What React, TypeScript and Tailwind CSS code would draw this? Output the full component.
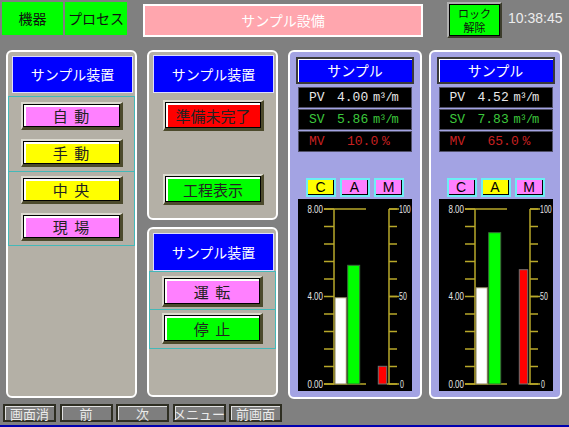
import type { ReactNode } from 'react';

type Gauge = {
  pv: string;
  sv: string;
  mv: string;
  cam: string[];
  white: number;
  green: number;
  red: number;
};

const gauges: Gauge[] = [
  { pv: '4.00', sv: '5.86', mv: '10.0', cam: ['bg-[#ffff00]', 'bg-[#ff80ff]', 'bg-[#ff80ff]'], white: 98.7, green: 66.3, red: 167.3 },
  { pv: '4.52', sv: '7.83', mv: '65.0', cam: ['bg-[#ff80ff]', 'bg-[#ffff00]', 'bg-[#ff80ff]'], white: 88.7, green: 33.7, red: 70.7 },
];

function HmiButton({ bg, children, className = '' }: { bg: string; children: ReactNode; className?: string }) {
  return (
    <div
      className={`border-t-2 border-l-2 border-b-[3px] border-r-[3px] border-t-[#dcdad0] border-l-[#dcdad0] border-b-[#4c4a2c] border-r-[#4c4a2c] ${className}`}
    >
      <div
        className={`h-full border border-black shadow-[inset_2px_2px_0_#fff] flex items-center justify-center text-[15px] leading-none text-[#222] whitespace-nowrap ${bg}`}
      >
        {children}
      </div>
    </div>
  );
}

function Header({ className = '' }: { className?: string }) {
  return (
    <div
      className={`ml-[4px] w-[121px] bg-[#0000ff] border border-[#dcdcff] flex items-center justify-center text-white text-[14px] ${className}`}
    >
      サンプル装置
    </div>
  );
}

// narrow scale label, squeezed horizontally like the panel's bitmap font
function Label({ x, y, sx = 0.7, end, children }: { x: number; y: number; sx?: number; end?: boolean; children: string }) {
  return (
    <text transform={`translate(${x} ${y}) scale(${sx} 1)`} textAnchor={end ? 'end' : 'start'}>
      {children}
    </text>
  );
}

function Chart({ g }: { g: Gauge }) {
  const ticks = Array.from({ length: 11 }, (_, i) => 10 + i * 17.5);
  const tick = '#b8a82a';
  const bottom = 185;
  return (
    <svg width="114" height="192" className="mt-[2px] bg-black block">
      {ticks.map((y, i) => (
        <g key={i}>
          <line x1={26} x2={36} y1={y} y2={y} stroke={tick} strokeWidth={1.5} />
          <line x1={91} x2={99} y1={y} y2={y} stroke={tick} strokeWidth={1.5} />
        </g>
      ))}
      <line x1={36} x2={36} y1={10} y2={bottom} stroke={tick} strokeWidth={1.5} />
      <line x1={91} x2={91} y1={10} y2={bottom} stroke={tick} strokeWidth={1.5} />
      <line x1={26} x2={68} y1={10} y2={10} stroke={tick} strokeWidth={1.5} />
      <line x1={26} x2={68} y1={bottom} y2={bottom} stroke={tick} strokeWidth={1.5} />
      <line x1={91} x2={101} y1={10} y2={10} stroke={tick} strokeWidth={1.5} />
      <line x1={89} x2={101} y1={bottom} y2={bottom} stroke={tick} strokeWidth={1.5} />
      <line x1={91} x2={101} y1={97.5} y2={97.5} stroke={tick} strokeWidth={1.5} />

      <g fill="#e6e6e6" fontSize="10" fontFamily="'Liberation Sans', sans-serif">
        <Label x={25} y={13.5} sx={0.8} end>8.00</Label>
        <Label x={25} y={101} sx={0.8} end>4.00</Label>
        <Label x={25} y={188.5} sx={0.8} end>0.00</Label>
        <Label x={101} y={13.5}>100</Label>
        <Label x={101} y={101}>50</Label>
        <Label x={102} y={188.5}>0</Label>
      </g>

      <rect x={37} y={g.white} width={11.3} height={bottom - g.white} fill="#fff" stroke="#8a8258" strokeWidth={1} />
      <rect x={49.7} y={g.green} width={12} height={bottom - g.green} fill="#00ff00" stroke="#3a6a3a" strokeWidth={1} />
      <rect x={80.3} y={g.red} width={8.4} height={bottom - g.red} fill="#ff0000" stroke="#707070" strokeWidth={1} />
    </svg>
  );
}

function GaugePanel({ g, className = '' }: { g: Gauge; className?: string }) {
  return (
    <div
      className={`h-[349px] border-2 border-white rounded-[6px] bg-[#a3a3e3] flex flex-col items-center ${className}`}
    >
      <div className="mt-[5px] w-[118px] h-[27px] border-2 border-[#3a3a3a] bg-[#0000ff] shadow-[inset_1px_1px_0_#fff] flex items-center justify-center text-white text-[14px]">
        サンプル
      </div>
      <div className="mt-[3px] w-[114px] flex flex-col gap-[1px] font-['Liberation_Mono',monospace] text-[13px]">
        <div className="h-[21px] bg-black border border-[#505068] flex items-center text-[#e8e8e8]">
          <span className="ml-[10px] w-[28px]">PV</span>
          <span className="w-[36px]">{g.pv}</span>
          <span className="text-[12px] tracking-[-1px]">m³/m</span>
        </div>
        <div className="h-[21px] bg-black border border-[#505068] flex items-center text-[#3cc83c]">
          <span className="ml-[10px] w-[28px]">SV</span>
          <span className="w-[36px]">{g.sv}</span>
          <span className="text-[12px] tracking-[-1px]">m³/m</span>
        </div>
        <div className="h-[21px] bg-black border border-[#505068] flex items-center text-[#c82020]">
          <span className="ml-[10px] w-[38px]">MV</span>
          <span className="w-[35px]">{g.mv}</span>
          <span>%</span>
        </div>
      </div>
      <div className="mt-[26px] flex gap-[4px]">
        {['C', 'A', 'M'].map((l, i) => (
          <div key={l} className="w-[30px] h-[19px] border-2 border-[#6ceef4]">
            <div
              className={`h-full border-r border-b border-black flex items-center justify-center text-[14px] leading-none text-black font-['Liberation_Sans',sans-serif] ${g.cam[i]}`}
            >
              {l}
            </div>
          </div>
        ))}
      </div>
      <Chart g={g} />
    </div>
  );
}

export default function App() {
  return (
    <div className="w-[569px] h-[427px] bg-[#808080] overflow-hidden flex flex-col font-['Noto_Sans_CJK_JP',sans-serif]">
      {/* top bar */}
      <div className="h-[50px] flex items-start pt-[2px] pl-[2px]">
        <div className="w-[61px] h-[33px] bg-[#00ff00] flex items-center justify-center text-[14px] text-[#111]">機器</div>
        <div className="ml-[2px] w-[62px] h-[33px] bg-[#00ff00] flex items-center justify-center text-[14px] text-[#111]">プロセス</div>
        <div className="ml-[16px] mt-[2px] w-[280px] h-[33px] bg-[#ffa6ae] border-2 border-white flex items-center justify-center text-white text-[14px]">
          サンプル設備
        </div>
        <div className="ml-[24px] w-[55px] h-[36px] border-2 border-t-[#b0b0b0] border-l-[#b0b0b0] border-b-[#3c3c2c] border-r-[#3c3c2c]">
          <div className="h-full border border-black bg-[#00ff00] flex flex-col items-center justify-center gap-[1px] text-[11px] leading-[13px] text-[#111] whitespace-nowrap">
            <span>ロック</span>
            <span>解除</span>
          </div>
        </div>
        <div className="ml-[6px] mt-[9px] text-[14px] leading-none text-[#ececec] font-['Liberation_Sans',sans-serif]">10:38:45</div>
      </div>

      {/* main */}
      <div className="h-[354px] flex items-start pl-[6px]">
        <div className="w-[131px] h-[348px] border-2 border-white rounded-[6px] bg-[#b4b0a6] pt-[4px]">
          <Header className="h-[37px]" />
          <div className="mt-[3px] border border-[#44b8b8] flex flex-col items-center pt-[5px] pb-[4px] gap-[9px]">
            <HmiButton bg="bg-[#ff80ff]" className="w-[102px] h-[28px]">自&nbsp;&nbsp;動</HmiButton>
            <HmiButton bg="bg-[#ffff00]" className="w-[102px] h-[28px]">手&nbsp;&nbsp;動</HmiButton>
          </div>
          <div className="border border-t-0 border-[#44b8b8] flex flex-col items-center pt-[4px] pb-[4px] gap-[9px]">
            <HmiButton bg="bg-[#ffff00]" className="w-[102px] h-[28px]">中&nbsp;&nbsp;央</HmiButton>
            <HmiButton bg="bg-[#ff80ff]" className="w-[102px] h-[28px]">現&nbsp;&nbsp;場</HmiButton>
          </div>
        </div>

        <div className="ml-[10px] w-[131px] flex flex-col gap-[7px]">
          <div className="h-[170px] border-2 border-white rounded-[6px] bg-[#b4b0a6] pt-[3px]">
            <Header className="h-[38px]" />
            <HmiButton bg="bg-[#ff0000]" className="ml-[14px] mt-[7px] w-[101px] h-[31px]">準備未完了</HmiButton>
            <HmiButton bg="bg-[#00ff00]" className="ml-[14px] mt-[43px] w-[101px] h-[31px]">工程表示</HmiButton>
          </div>
          <div className="h-[170px] border-2 border-white rounded-[6px] bg-[#b4b0a6] pt-[4px]">
            <Header className="h-[38px]" />
            <div className="border border-[#44b8b8] flex flex-col items-center pt-[4px] pb-[2px]">
              <HmiButton bg="bg-[#ff80ff]" className="w-[101px] h-[31px]">運&nbsp;&nbsp;転</HmiButton>
            </div>
            <div className="border border-t-0 border-[#44b8b8] flex flex-col items-center pt-[3px] pb-[4px]">
              <HmiButton bg="bg-[#00ff00]" className="w-[101px] h-[31px]">停&nbsp;&nbsp;止</HmiButton>
            </div>
          </div>
        </div>

        <GaugePanel g={gauges[0]} className="ml-[10px] w-[134px]" />
        <GaugePanel g={gauges[1]} className="ml-[7px] w-[133px]" />
      </div>

      {/* bottom bar */}
      <div className="h-[18px] flex pl-[3px] gap-[3.5px]">
        {['画面消', '前', '次', 'メニュー', '前画面'].map((t) => (
          <div key={t} className="w-[53px] h-[18px] border-2 border-[#2e2e22]">
            <div className="h-full shadow-[inset_1px_1px_0_#e0e0e0] bg-[#7e7e7e] flex items-center justify-center text-[13px] leading-none text-[#ececec] whitespace-nowrap">
              {t}
            </div>
          </div>
        ))}
      </div>
      <div className="mt-[3px] h-[2px] bg-[#0000b0]" />
    </div>
  );
}
